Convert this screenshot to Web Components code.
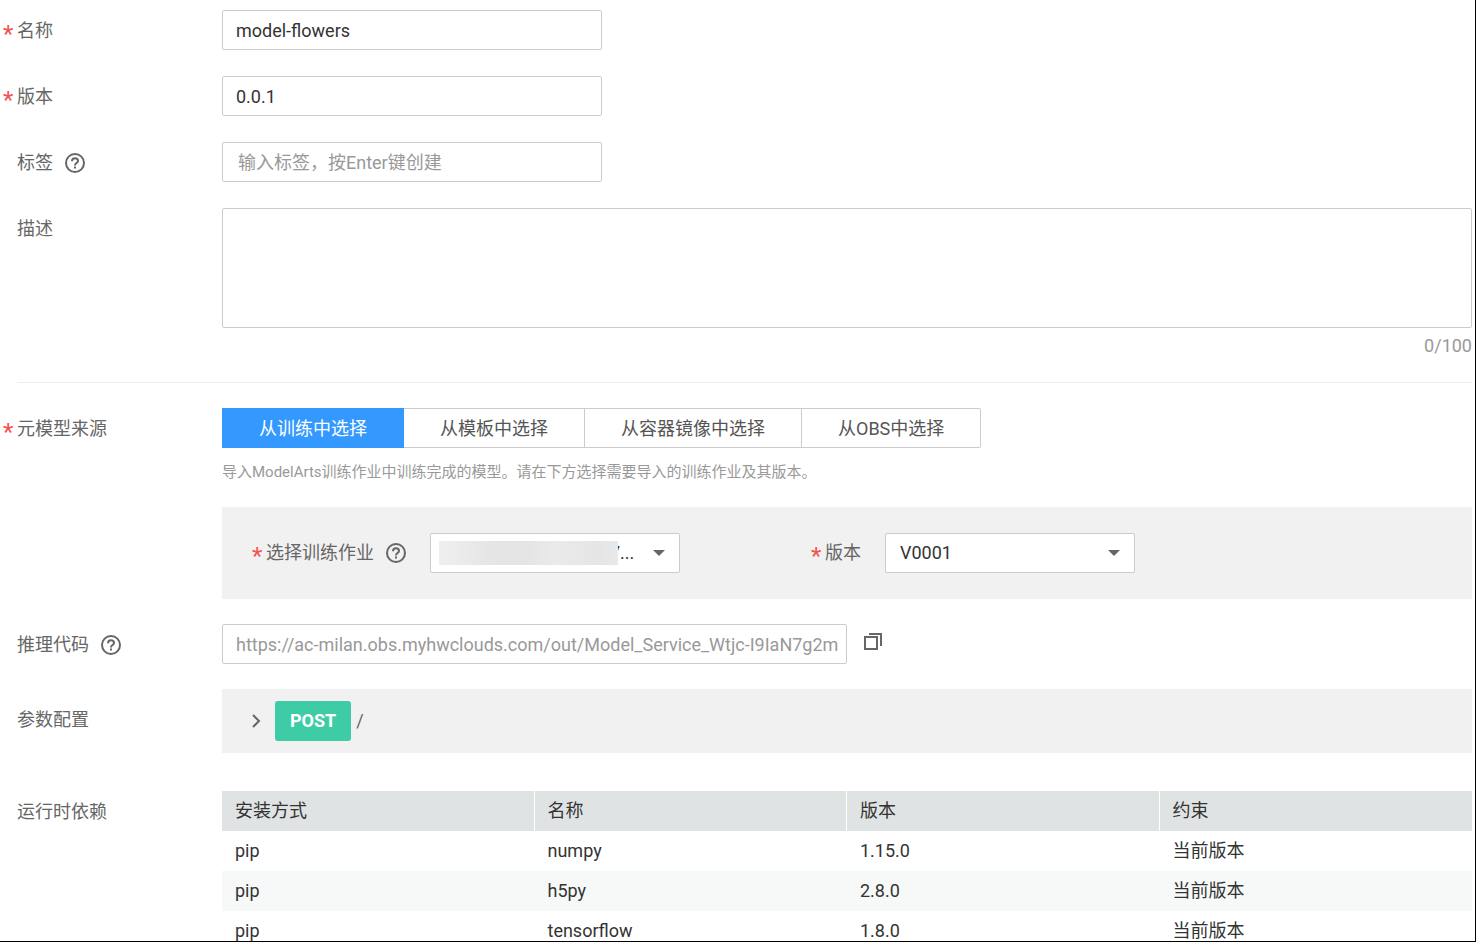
<!DOCTYPE html>
<html lang="zh-CN">
<head>
<meta charset="utf-8">
<meta name="viewport" content="width=device-width, initial-scale=1">
<title>导入模型</title>
<style>
  body { margin: 0; background: #fff; font: 18px/24px Roboto, "Noto Sans CJK SC", sans-serif; color: #666; }
</style>
</head>
<body>
<model-form></model-form>

<template id="help-icon-tpl">
  <style>
    :host { display: inline-flex; width: 20px; height: 20px; }
    button { display: flex; padding: 0; border: 0; background: none; }
    svg { width: 20px; height: 20px; }
  </style>
  <button type="button" aria-label="帮助">
    <svg viewBox="0 0 20 20" fill="none" stroke="#666" stroke-width="2">
      <circle cx="10" cy="10" r="9"/>
      <path d="M7 8.2C7 6.300 8.300 5.200 10 5.200s3 1.100 3 2.700c0 2-3 2.300-3 4.500"/>
      <path d="M10 13.600v2"/>
    </svg>
  </button>
</template>

<template id="required-mark-tpl">
  <style>
    :host { display: block; flex: none; box-sizing: border-box; width: 15px; padding: 6px 0 0 1px; color: #f5504e; font-size: 24px; line-height: 30px; }
  </style>
  <span>*</span>
</template>

<template id="form-row-tpl">
  <style>
    :host { display: grid; grid-template-columns: 220px minmax(0, 1fr); align-items: start; }
    .label { display: flex; align-items: center; box-sizing: border-box; min-height: 40px; padding: 2px 0 0 15px; }
    :host([required]) .label { padding-left: 0; }
    :host(:not([required])) required-mark { display: none; }
    help-icon { margin-left: 12px; }
    :host(:not([help])) help-icon { display: none; }
    :host([tall]) .label { min-height: 60px; }
  </style>
  <div class="label"><required-mark></required-mark><slot name="label"></slot><help-icon></help-icon></div>
  <div><slot></slot></div>
</template>

<template id="drop-down-tpl">
  <style>
    :host { display: grid; width: 250px; align-items: center; }
    ::slotted(select) { grid-area: 1 / 1; }
    svg { grid-area: 1 / 1; justify-self: end; margin-right: 15px; width: 12px; height: 6px; pointer-events: none; }
    .mask { display: none; grid-area: 1 / 1; z-index: 1; width: 179px; height: 24px; margin-left: 9px; pointer-events: none;
      background: linear-gradient(90deg, #efefef, #e5e5e5 30%, #e5e5e5 50%, #eaeaea 65%, #e5e5e5 90%, #e9e9e9); }
    :host([masked]) .mask { display: block; }
  </style>
  <slot></slot>
  <span class="mask"></span>
  <svg viewBox="0 0 12 6"><path d="M0 0h12L6 6z" fill="#666"/></svg>
</template>

<template id="source-tabs-tpl">
  <style>
    :host { display: flex; }
    button { height: 40px; box-sizing: border-box; margin: 0; padding: 2px 36px 0; font: inherit; color: #555; background: #fff; border: 1px solid #ccc; border-left-width: 0; white-space: nowrap; }
    button[aria-pressed="true"] { background: #3399ff; border-color: #3399ff; border-left-width: 1px; color: #fff; }
    button:first-child { border-radius: 2px 0 0 2px; }
    button:last-child { border-radius: 0 2px 2px 0; }
  </style>
  <button type="button" aria-pressed="true">从训练中选择</button><button type="button" aria-pressed="false">从模板中选择</button><button type="button" aria-pressed="false">从容器镜像中选择</button><button type="button" aria-pressed="false">从OBS中选择</button>
</template>

<template id="api-panel-tpl">
  <style>
    :host { display: flex; align-items: center; height: 64px; padding-left: 28px; background: #f1f1f1; }
    button { display: flex; padding: 0; border: 0; background: none; }
    svg { width: 12px; height: 14px; }
    .method { margin: 0 5px 0 13px; padding: 8px 15px; border-radius: 3px; background: #3dcca6; color: #fff; font-weight: 700; }
  </style>
  <button type="button" aria-label="展开"><svg viewBox="0 0 12 14" fill="none" stroke="#666" stroke-width="2"><path d="M3 1l6 6-6 6"/></svg></button>
  <span class="method">POST</span><span>/</span>
</template>

<template id="dependency-table-tpl">
  <style>
    :host { display: block; color: #333; }
    table { width: 100%; table-layout: fixed; border-collapse: separate; border-spacing: 0; }
    th, td { height: 40px; box-sizing: border-box; padding: 0 12px 0 13px; text-align: left; font-weight: 400; }
    th { background: #dfe3e3; }
    th:not(:last-child) { border-right: 1px solid #fff; }
    tbody tr:nth-child(even) { background: #f7f9f9; }
  </style>
  <table>
    <thead><tr><th>安装方式</th><th>名称</th><th>版本</th><th>约束</th></tr></thead>
    <tbody>
      <tr><td>pip</td><td>numpy</td><td>1.15.0</td><td>当前版本</td></tr>
      <tr><td>pip</td><td>h5py</td><td>2.8.0</td><td>当前版本</td></tr>
      <tr><td>pip</td><td>tensorflow</td><td>1.8.0</td><td>当前版本</td></tr>
    </tbody>
  </table>
</template>

<template id="model-form-tpl">
  <style>
    :host { display: block; height: 100vh; box-sizing: border-box; overflow: hidden; border: solid #000; border-width: 0 1px 1px 0; }
    form { display: flex; flex-direction: column; padding: 10px 3px 0 2px; }
    form > * { margin-bottom: 26px; }
    input, select, textarea { display: block; box-sizing: border-box; height: 40px; margin: 0; padding: 0 13px; border: 1px solid #ccc; border-radius: 2px; background: #fff; color: #333; font: inherit; outline: 0; }
    input { width: 380px; max-width: 100%; }
    input::placeholder { color: #999; opacity: 1; }
    #tags { padding-left: 15px; }
    #code { width: 625px; padding-right: 8px; color: #999; }
    textarea { width: 100%; height: 120px; resize: none; }
    select { width: 100%; padding-left: 14px; appearance: none; }
    #job { padding-left: 179px; }
    .count { margin-top: 6px; text-align: right; color: #999; }
    .describe { margin-bottom: 24px; }
    hr { height: 1px; margin: 0 0 25px 15px; border: 0; background: #eee; }
    .hint { margin: 12px 0 23px; font-size: 15px; color: #999; }
    .panel { display: flex; align-items: center; height: 92px; padding-left: 29px; background: #f1f1f1; }
    .panel help-icon { margin: 0 24px 0 12px; }
    .panel .second { margin-left: 130px; }
    .panel .version { margin-right: 24px; }
    .source, .inference { margin-bottom: 25px; }
    .code { display: flex; align-items: center; gap: 17px; }
    .copy { display: flex; padding: 0; border: 0; background: none; }
    .copy svg { width: 18px; height: 24px; }
    .params { margin-bottom: 38px; }
  </style>
  <form>
    <form-row required><label slot="label" for="name">名称</label><input id="name" value="model-flowers"></form-row>
    <form-row required><label slot="label" for="version">版本</label><input id="version" value="0.0.1"></form-row>
    <form-row help><label slot="label" for="tags">标签</label><input id="tags" placeholder="输入标签，按Enter键创建"></form-row>
    <form-row class="describe"><label slot="label" for="desc">描述</label><textarea id="desc" maxlength="100"></textarea><div class="count">0/100</div></form-row>
    <hr>
    <form-row class="source" required>
      <span slot="label">元模型来源</span>
      <source-tabs></source-tabs>
      <p class="hint">导入ModelArts训练作业中训练完成的模型。请在下方选择需要导入的训练作业及其版本。</p>
      <div class="panel">
        <required-mark></required-mark><label for="job">选择训练作业</label><help-icon></help-icon>
        <drop-down masked><select id="job"><option>7...</option></select></drop-down>
        <required-mark class="second"></required-mark><label class="version" for="jobver">版本</label>
        <drop-down><select id="jobver"><option>V0001</option></select></drop-down>
      </div>
    </form-row>
    <form-row class="inference" help>
      <label slot="label" for="code">推理代码</label>
      <div class="code"><input id="code" readonly value="https://ac-milan.obs.myhwclouds.com/out/Model_Service_Wtjc-I9IaN7g2ml">
        <button class="copy" type="button" aria-label="复制"><svg viewBox="0 0 18 24" fill="none" stroke="#666" stroke-width="2"><path d="M1 5h12v12H1z"/><path d="M5 2h12v12" /></svg></button></div>
    </form-row>
    <form-row class="params" tall><span slot="label">参数配置</span><api-panel></api-panel></form-row>
    <form-row><span slot="label">运行时依赖</span><dependency-table></dependency-table></form-row>
  </form>
</template>

<script>
  const define = (name) => customElements.define(name, class extends HTMLElement {
    constructor() {
      super();
      this.attachShadow({ mode: "open" })
        .append(document.getElementById(name + "-tpl").content.cloneNode(true));
    }
  });
  ["help-icon", "required-mark", "form-row", "drop-down", "source-tabs", "api-panel", "dependency-table", "model-form"].forEach(define);
</script>
</body>
</html>
